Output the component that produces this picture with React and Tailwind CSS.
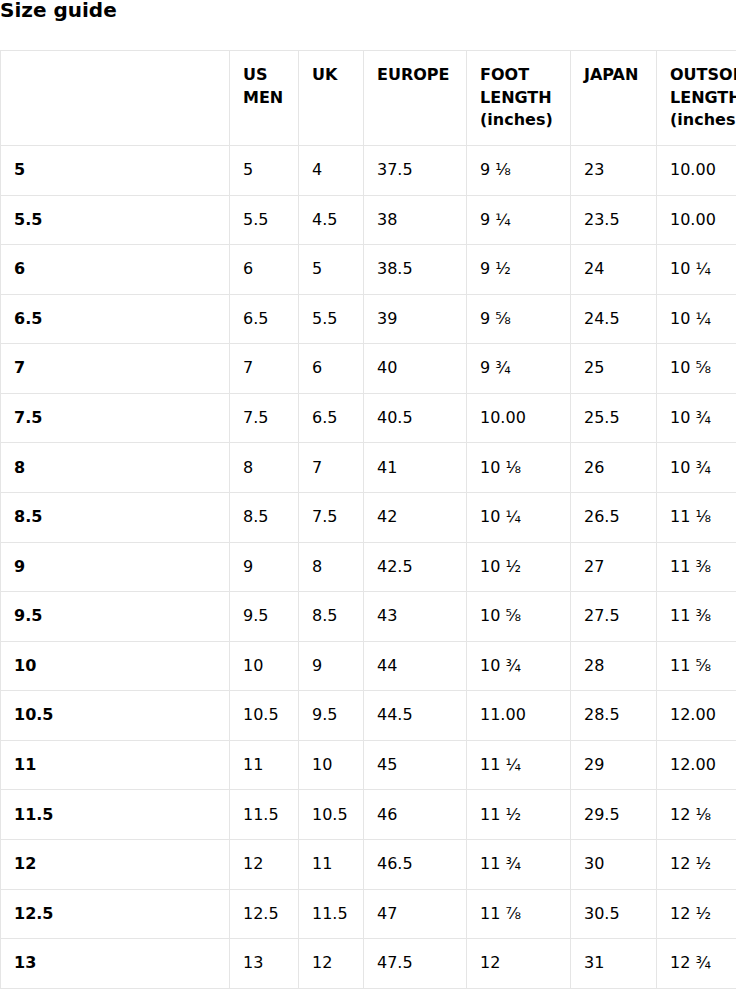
import React from 'react';

const rows = [
  ['5', '5', '4', '37.5', '9 ⅛', '23', '10.00'],
  ['5.5', '5.5', '4.5', '38', '9 ¼', '23.5', '10.00'],
  ['6', '6', '5', '38.5', '9 ½', '24', '10 ¼'],
  ['6.5', '6.5', '5.5', '39', '9 ⅝', '24.5', '10 ¼'],
  ['7', '7', '6', '40', '9 ¾', '25', '10 ⅝'],
  ['7.5', '7.5', '6.5', '40.5', '10.00', '25.5', '10 ¾'],
  ['8', '8', '7', '41', '10 ⅛', '26', '10 ¾'],
  ['8.5', '8.5', '7.5', '42', '10 ¼', '26.5', '11 ⅛'],
  ['9', '9', '8', '42.5', '10 ½', '27', '11 ⅜'],
  ['9.5', '9.5', '8.5', '43', '10 ⅝', '27.5', '11 ⅜'],
  ['10', '10', '9', '44', '10 ¾', '28', '11 ⅝'],
  ['10.5', '10.5', '9.5', '44.5', '11.00', '28.5', '12.00'],
  ['11', '11', '10', '45', '11 ¼', '29', '12.00'],
  ['11.5', '11.5', '10.5', '46', '11 ½', '29.5', '12 ⅛'],
  ['12', '12', '11', '46.5', '11 ¾', '30', '12 ½'],
  ['12.5', '12.5', '11.5', '47', '11 ⅞', '30.5', '12 ½'],
  ['13', '13', '12', '47.5', '12', '31', '12 ¾'],
];

const headers = ['', 'US MEN', 'UK', 'EUROPE', 'FOOT LENGTH (inches)', 'JAPAN'];

function App() {
  return (
    <div className="w-[736px] overflow-hidden bg-white text-black font-['DejaVu_Sans',sans-serif]">
      <h2 className="text-[20px] leading-[21px] font-bold mb-[29px]">Size guide</h2>

      {/* table runs past the right edge, like the original page */}
      <table className="table-fixed border-collapse w-[800px] text-[16px] leading-[1.4]">
        <colgroup>
          <col className="w-[229px]" />
          <col className="w-[69px]" />
          <col className="w-[65px]" />
          <col className="w-[103px]" />
          <col className="w-[104px]" />
          <col className="w-[86px]" />
          <col className="w-[144px]" />
        </colgroup>
        <thead>
          <tr>
            {headers.map((h, i) => (
              <th key={i} className="border border-[#e5e5e5] px-[13px] py-[13.4px] text-left align-top font-bold">
                {h}
              </th>
            ))}
            <th className="border border-[#e5e5e5] px-[13px] py-[13.4px] text-left align-top font-bold whitespace-nowrap">
              OUTSOLE<br />LENGTH<br />(inches)
            </th>
          </tr>
        </thead>
        <tbody>
          {rows.map((r) => (
            <tr key={r[0]}>
              {r.map((cell, i) => (
                <td
                  key={i}
                  className={
                    i === 0
                      ? 'border border-[#e5e5e5] px-[13px] py-[13.1px] font-bold'
                      : 'border border-[#e5e5e5] px-[13px] py-[13.1px]'
                  }
                >
                  {cell}
                </td>
              ))}
            </tr>
          ))}
        </tbody>
      </table>
    </div>
  );
}

export default App;
